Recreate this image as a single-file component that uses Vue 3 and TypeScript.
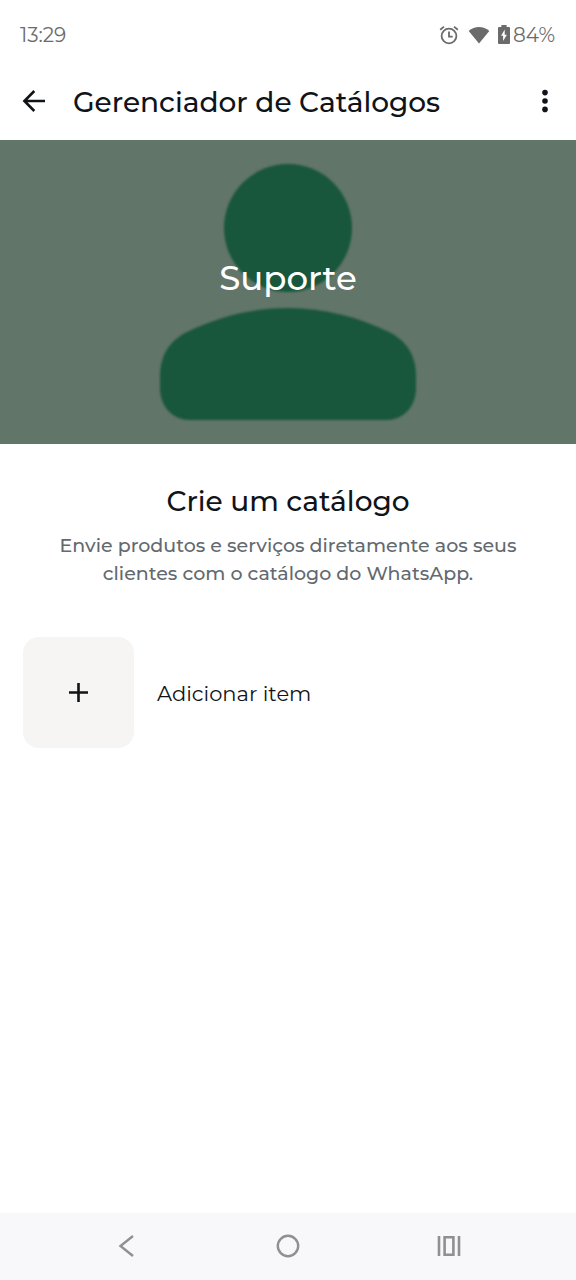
<script setup lang="ts">
const time: string = '13:29'
const battery: string = '84%'
const title: string = 'Gerenciador de Catálogos'
const businessName: string = 'Suporte'
</script>

<template>
  <div class="screen">
    <div class="status-bar">
      <time>{{ time }}</time>
      <div class="status-icons">
        <svg class="alarm" width="20" height="20" viewBox="0 0 20 20" fill="none" stroke="currentColor" aria-hidden="true">
          <circle cx="10" cy="11" r="7.4" stroke-width="1.8" />
          <path d="M10 6.5V11.7H13.7" stroke-width="1.8" />
          <path d="M1.2 4.8L5 1.6M18.8 4.8L15 1.6" stroke-width="1.8" />
        </svg>
        <svg class="wifi" width="22" height="18" viewBox="0 0 22 18" fill="currentColor" aria-hidden="true">
          <path d="M.7 5.1C6.5-.3 15.5-.3 21.3 5.1L11 17.6Z" />
        </svg>
        <svg class="battery" width="12" height="20" viewBox="0 0 12 20" aria-hidden="true">
          <path fill="currentColor" d="M3.4 0H8.6V2H11Q12 2 12 3V18Q12 19 11 19H1Q0 19 0 18V3Q0 2 1 2H3.4Z" />
          <path fill="#fff" d="M6.7 4.4L3.1 10.8H5.1V16L8.9 9.7H6.7Z" />
        </svg>
        <span>{{ battery }}</span>
      </div>
    </div>

    <header class="app-bar">
      <button class="icon-button" type="button" aria-label="Voltar">
        <svg width="24" height="24" viewBox="0 0 24 24" fill="none" stroke="currentColor" stroke-width="2.6" aria-hidden="true">
          <path d="M23 12H2.5M12.3 2L2.4 12L12.3 22" />
        </svg>
      </button>
      <h1>{{ title }}</h1>
      <button class="icon-button" type="button" aria-label="Mais opções">
        <svg width="24" height="24" viewBox="0 0 24 24" fill="currentColor" aria-hidden="true">
          <circle cx="12" cy="3.6" r="2.8" />
          <circle cx="12" cy="12" r="2.8" />
          <circle cx="12" cy="20.4" r="2.8" />
        </svg>
      </button>
    </header>

    <main>
      <section class="cover">
        <svg class="avatar" width="256" height="256" viewBox="0 0 256 256" aria-hidden="true">
          <circle cx="128" cy="64" r="64" />
          <path d="M0 212C0 190 11 176 27 168C58 153 92 144 128 144C164 144 198 153 229 168C245 176 256 190 256 212V224C256 243 243 256 226 256H30C13 256 0 243 0 224Z" />
        </svg>
        <p class="cover-name">{{ businessName }}</p>
      </section>

      <section class="intro">
        <h2>Crie um catálogo</h2>
        <p>Envie produtos e serviços diretamente aos seus clientes com o catálogo do WhatsApp.</p>
      </section>

      <button class="add-item" type="button">
        <span class="add-tile">
          <svg width="20" height="20" viewBox="0 0 20 20" fill="none" stroke="currentColor" stroke-width="2.6" aria-hidden="true">
            <path d="M9.5 0V19M0 9.5H19" />
          </svg>
        </span>
        <span class="add-label">Adicionar item</span>
      </button>
    </main>

    <nav class="system-nav" aria-label="Navegação do sistema">
      <button type="button" aria-label="Voltar à tela anterior">
        <svg width="24" height="24" viewBox="0 0 24 24" fill="none" stroke="currentColor" stroke-width="2.4" aria-hidden="true">
          <path d="M18 2L5.5 12L18 22" />
        </svg>
      </button>
      <button type="button" aria-label="Início">
        <svg width="24" height="24" viewBox="0 0 24 24" fill="none" stroke="currentColor" stroke-width="2.4" aria-hidden="true">
          <circle cx="12" cy="12" r="10.2" />
        </svg>
      </button>
      <button type="button" aria-label="Aplicativos recentes">
        <svg width="24" height="24" viewBox="0 0 24 24" fill="none" stroke="currentColor" stroke-width="2.6" aria-hidden="true">
          <path d="M2 2V22M22 2V22M7.6 3.2H16.4V20.8H7.6Z" />
        </svg>
      </button>
    </nav>
  </div>
</template>

<style>
body {
  margin: 0;
  background: #fff;
}
</style>

<style scoped>
.screen {
  display: flex;
  flex-direction: column;
  min-height: 100vh;
  background: #fff;
  color: #101418;
  font-family: Montserrat, Inter, "Noto Sans", sans-serif;
}

h1,
h2,
p {
  margin: 0;
  font-weight: 500;
}

button {
  padding: 0;
  border: 0;
  background: none;
  color: inherit;
  font: inherit;
  cursor: pointer;
}

svg {
  display: block;
  flex: none;
}

.status-bar {
  display: flex;
  align-items: center;
  justify-content: space-between;
  box-sizing: border-box;
  height: 68px;
  padding: 2px 21px 0 20px;
  color: #6b6b6b;
  font-size: 20px;
  line-height: 24px;
}

.status-icons {
  display: flex;
  align-items: center;
}

.wifi {
  margin: 0 8px 0 9px;
}

.battery {
  margin-right: 3px;
}

.app-bar {
  display: flex;
  align-items: center;
  box-sizing: border-box;
  height: 72px;
  padding: 0 20px 6px;
}

.app-bar h1 {
  flex: 1;
  margin-left: 25px;
  padding-top: 2px;
  font-size: 28px;
  line-height: 36px;
}

.icon-button {
  display: grid;
  place-items: center;
  width: 28px;
  height: 40px;
}

.icon-button:last-child {
  margin-right: -3px;
}

.cover {
  display: grid;
  place-items: center;
  padding: 24px 0;
  background: #617568;
}

.avatar,
.cover-name {
  grid-area: 1 / 1;
}

.avatar {
  fill: #18573c;
  filter: blur(1px);
}

.cover-name {
  z-index: 1;
  padding-bottom: 28px;
  color: #fff;
  font-size: 34px;
  line-height: 44px;
}

.intro {
  padding: 39px 48px 0;
  text-align: center;
}

.intro h2 {
  font-size: 28px;
  line-height: 36px;
}

.intro p {
  margin-top: 13px;
  color: #626a6f;
  font-size: 19px;
  line-height: 28px;
}

.add-item {
  display: flex;
  align-items: center;
  gap: 23px;
  margin: 49px 23px 0;
}

.add-tile {
  display: grid;
  place-items: center;
  width: 111px;
  height: 111px;
  border-radius: 16px;
  background: #f6f5f3;
}

.add-label {
  padding-top: 2px;
  font-size: 21px;
  line-height: 28px;
}

.system-nav {
  display: grid;
  grid-template-columns: repeat(3, 1fr);
  place-items: center;
  box-sizing: border-box;
  height: 67px;
  margin-top: auto;
  padding: 0 8% 1px;
  background: #f8f8fb;
  color: #909092;
}
</style>
